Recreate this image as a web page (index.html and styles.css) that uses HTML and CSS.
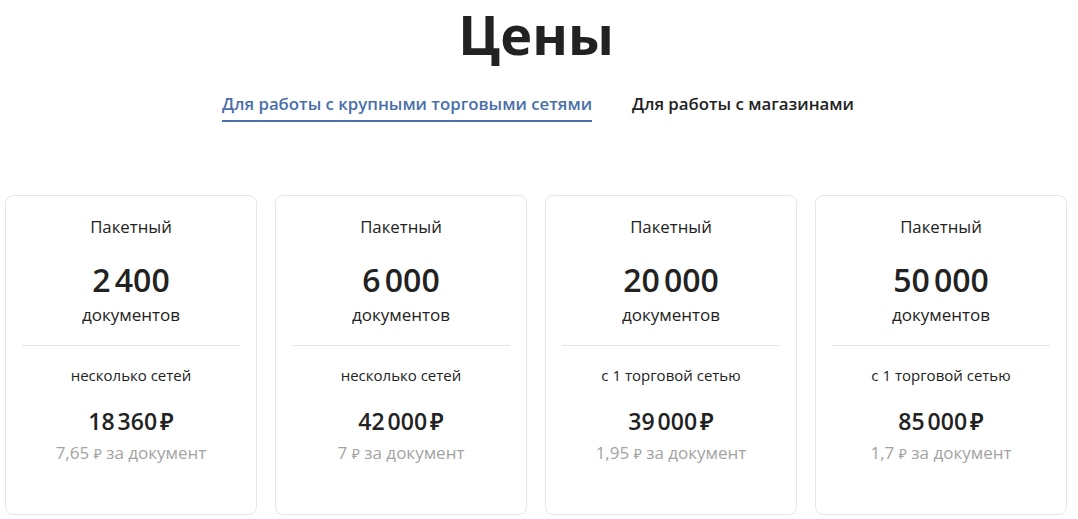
FILE: index.html
```html
<!DOCTYPE html>
<html>
<head>
    <title>Цены</title>
    <meta charset="UTF-8">
    <link rel="stylesheet" href="styles.css">
</head>
<body>
    <section class="prices">
        <h1>Цены</h1>

        <div class="tabs">
            <a href="#" class="tab active">Для работы с крупными торговыми сетями</a>
            <a href="#" class="tab">Для работы с магазинами</a>
        </div>

        <div class="cards">
            <div class="card">
                <div class="card-type">Пакетный</div>
                <div class="card-count">2&#8239;400</div>
                <div class="card-unit">документов</div>
                <div class="card-line"></div>
                <div class="card-note">несколько сетей</div>
                <div class="card-price">18&#8239;360&#8239;₽</div>
                <div class="card-per">7,65 <span class="rub">₽</span> за документ</div>
            </div>
            <div class="card">
                <div class="card-type">Пакетный</div>
                <div class="card-count">6&#8239;000</div>
                <div class="card-unit">документов</div>
                <div class="card-line"></div>
                <div class="card-note">несколько сетей</div>
                <div class="card-price">42&#8239;000&#8239;₽</div>
                <div class="card-per">7 <span class="rub">₽</span> за документ</div>
            </div>
            <div class="card">
                <div class="card-type">Пакетный</div>
                <div class="card-count">20&#8239;000</div>
                <div class="card-unit">документов</div>
                <div class="card-line"></div>
                <div class="card-note">с 1 торговой сетью</div>
                <div class="card-price">39&#8239;000&#8239;₽</div>
                <div class="card-per">1,95 <span class="rub">₽</span> за документ</div>
            </div>
            <div class="card">
                <div class="card-type">Пакетный</div>
                <div class="card-count">50&#8239;000</div>
                <div class="card-unit">документов</div>
                <div class="card-line"></div>
                <div class="card-note">с 1 торговой сетью</div>
                <div class="card-price">85&#8239;000&#8239;₽</div>
                <div class="card-per">1,7 <span class="rub">₽</span> за документ</div>
            </div>
        </div>
    </section>
</body>
</html>
```

FILE: styles.css
```css
* {
    margin: 0;
    padding: 0;
    box-sizing: border-box;
}

body {
    font-family: 'Open Sans', 'Noto Sans', sans-serif;
    background: #fff;
    color: #222;
    overflow: hidden;
}

.prices {
    padding: 0 11px 0 5px;
}

h1 {
    text-align: center;
    font-size: 54px;
    font-weight: 700;
    line-height: 68px;
    color: #222;
}

.tabs {
    display: flex;
    justify-content: center;
    gap: 40px;
    margin-top: 24px;
    padding-left: 4px;
}

.tab {
    font-size: 16.8px;
    font-weight: 600;
    line-height: 24px;
    color: #222;
    text-decoration: none;
    padding-bottom: 4px;
    border-bottom: 2px solid transparent;
}

.tab.active {
    color: #4a6fab;
    border-bottom-color: #4a6fab;
}

.cards {
    display: grid;
    grid-template-columns: repeat(4, 1fr);
    gap: 18px;
    margin-top: 73px;
}

.card {
    border: 1px solid #e6e6e6;
    border-radius: 8px;
    height: 320px;
    padding: 19px 16px 0;
    text-align: center;
}

.card-type {
    font-size: 16.8px;
    line-height: 24px;
}

.card-count {
    font-size: 32px;
    font-weight: 600;
    line-height: 42px;
    margin-top: 20px;
}

.card-unit {
    font-size: 17px;
    line-height: 24px;
    margin-top: 2px;
}

.card-line {
    height: 1px;
    background: #e6e6e6;
    margin: 18px 0 19px;
}

.card-note {
    font-size: 15px;
    line-height: 20px;
}

.card-price {
    font-size: 23px;
    font-weight: 600;
    line-height: 32px;
    margin-top: 20px;
}

.card-per {
    font-size: 17px;
    line-height: 24px;
    color: #a3a3a3;
    margin-top: 4px;
}

.rub {
    font-size: 14px;
}
```
